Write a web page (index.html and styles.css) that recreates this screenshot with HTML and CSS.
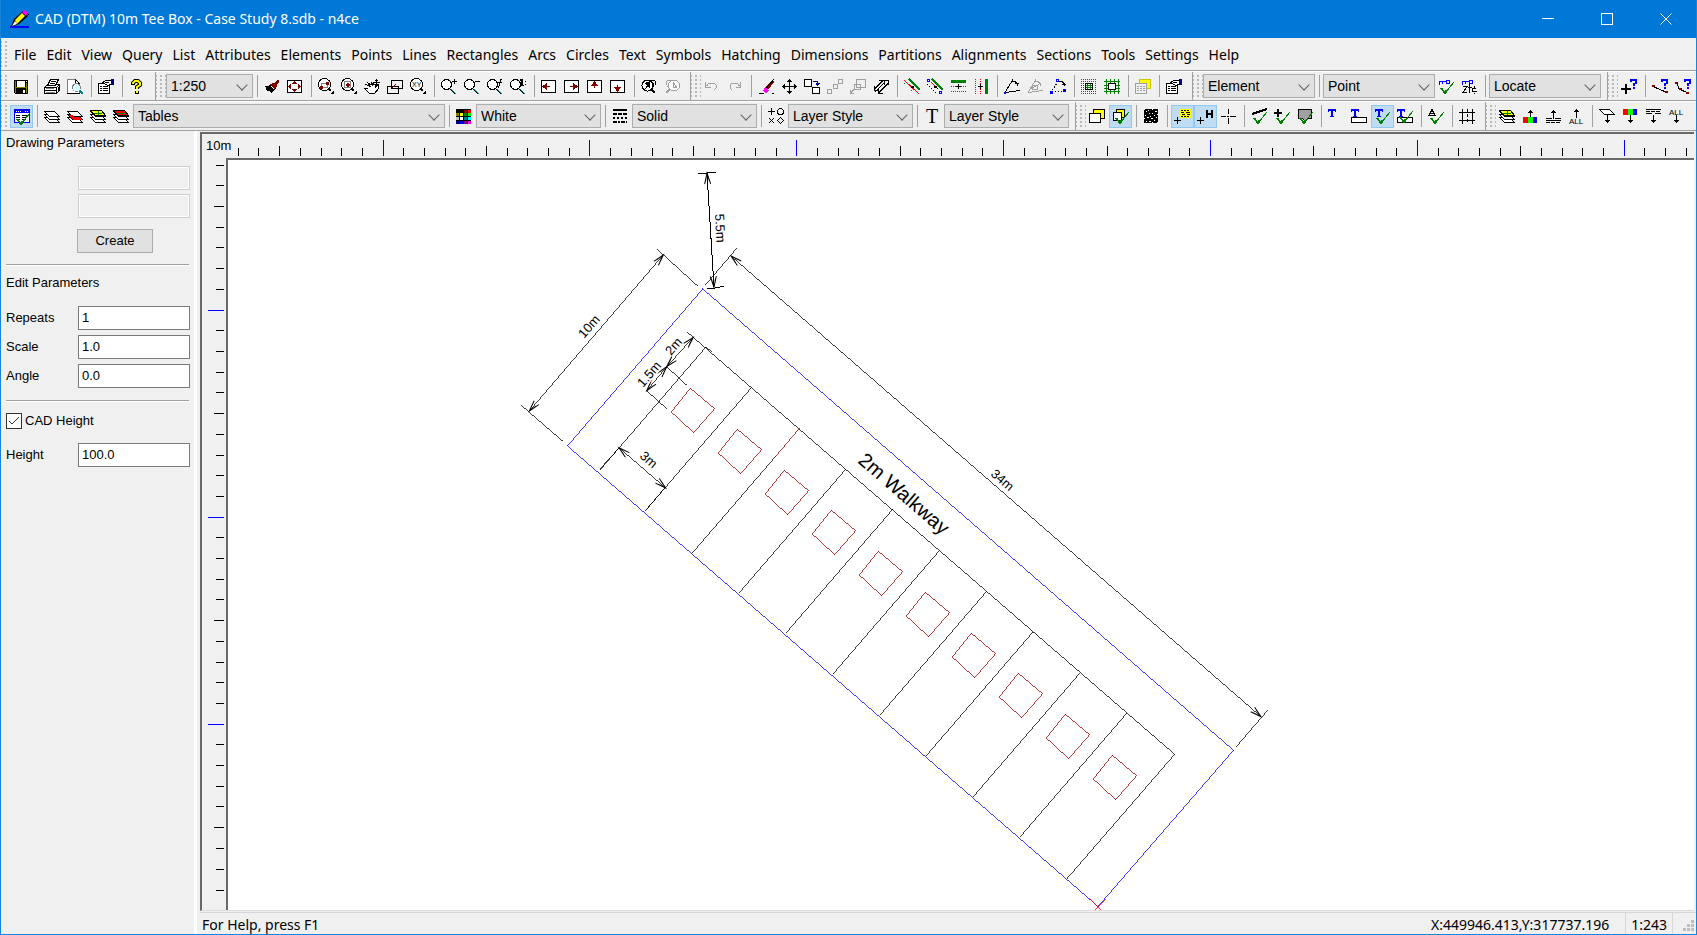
FILE: index.html
```html
<!DOCTYPE html>
<html lang="en">
<head>
<meta charset="utf-8">
<title>CAD (DTM) 10m Tee Box - Case Study 8.sdb - n4ce</title>
<link rel="stylesheet" href="styles.css">
</head>
<body>
<svg class="defs" width="0" height="0" aria-hidden="true">
  <defs>
    <g id="lens"><path stroke="#008080" d="M13 14l5 5"/><path d="M12 14l5 5"/><circle cx="8.500" cy="9.500" r="5" fill="#fff"/></g>
    <g id="zoomarea"><path stroke-width="2" d="M14 14l2 2"/><circle cx="9.500" cy="9.500" r="6" fill="#fff"/><path class="solid" d="M19 15v4h-4z"/></g>
    <g id="panel"><path fill="#fff" d="M3.500 5.500h14v12h-14z"/></g>
    <g id="tick"><path stroke="#008000" d="M18.500 6.500l-8 10"/><path stroke="#008000" stroke-width="2" d="M6 12l4 5 2-3"/></g>
    <g id="sheets"><path fill="#fff" d="M3.500 12.500l5 5h10l-5-5z"/><path fill="#fff" d="M3.500 9.500l5 5h10l-5-5z"/><path fill="#fff" d="M3.500 6.500l5 5h10l-5-5z"/></g>
    <g id="props"><path fill="#fff" d="M3.500 8.500h11v10h-11z"/><path d="M5 11.500h2M8 11.500h5M5 13.500h2M8 13.500h5M5 15.500h2M8 15.500h5"/><path fill="#fff" d="M6.500 8.500l4-3h6v4l-4 1-3-2z"/><path d="M10 7.500h4"/><path stroke="#000080" stroke-width="3" d="M17.500 4v6"/></g>
    <g id="q"><path stroke="#00f" stroke-width="2" d="M13 7V5h5v3l-2 1v2M16 12v2"/></g>
    <g id="key"><path stroke="#00f" d="M4.500 6.500h7M4.500 6v4M7.500 6v3"/><circle cx="13" cy="7" r="2" stroke="#00f"/></g>
    <g id="up"><path d="M11.500 5v9M9 7.500h5M10 6.500h3"/></g>
    <g id="down"><path d="M11.500 10v8M9 15.500h5M10 16.500h3"/></g>
    <g id="tletter"><path class="bold" stroke="#00f" stroke-width="2" d="M3 5h8M7 4v8"/><path stroke="#00f" d="M3.500 4v3M10.500 4v3M5 11.500h4"/></g>
    <path id="bay" d="M752 387L645 511"/>
    <path id="mat" d="M690.300 388.300l24.400 20.400-21 24-22.400-20.700z"/>
    <marker id="arrow" markerUnits="userSpaceOnUse" markerWidth="14" markerHeight="12" refX="12" refY="6" orient="auto-start-reverse" viewBox="0 0 14 12"><path d="M1 3L12 6L1 9M4 4L12 6L4 8" fill="none" stroke="#000"/></marker>
  </defs>
</svg>

<div class="window">
  <header class="titlebar">
    <svg class="logo" width="22" height="20" viewBox="0 0 22 20" aria-hidden="true"><path d="M2 18l3-8 9-8 5 5-9 8z" fill="#000"/><path d="M6 11l7-7 3 3-8 8z" fill="#ff0"/><path d="M3 17l3-5 2 3z" fill="#fff"/><path d="M13 3l3-2 3 3-2 3z" fill="#f0f"/><path d="M18 4l2 2" stroke="#000"/><path d="M1 18h19" stroke="#00f" stroke-width="2"/></svg>
    <h1 class="title">CAD (DTM) 10m Tee Box - Case Study 8.sdb - n4ce</h1>
    <div class="window-buttons">
      <button class="winbtn" aria-label="Minimize"><svg width="12" height="12"><path d="M0 5.500h12"/></svg></button>
      <button class="winbtn" aria-label="Maximize"><svg width="12" height="12"><path d="M.5.5h11v11H.5z"/></svg></button>
      <button class="winbtn smooth" aria-label="Close"><svg width="12" height="12"><path d="M.5.5l11 11M11.500.5l-11 11"/></svg></button>
    </div>
  </header>

  <nav class="menubar" aria-label="Main menu">
    <span class="grip"></span>
    <div class="menus">
      <button>File</button><button>Edit</button><button>View</button><button>Query</button><button>List</button><button>Attributes</button><button>Elements</button><button>Points</button><button>Lines</button><button>Rectangles</button><button>Arcs</button><button>Circles</button><button>Text</button><button>Symbols</button><button>Hatching</button><button>Dimensions</button><button>Partitions</button><button>Alignments</button><button>Sections</button><button>Tools</button><button>Settings</button><button>Help</button>
    </div>
  </nav>

  <div class="toolrow">
    <div class="toolbar" role="toolbar" aria-label="Standard">
      <span class="grip"></span>
      <button class="tool" aria-label="Save"><svg><path class="solid" d="M4 5h14v14H5l-1-1z"/><path class="solid olive" d="M5 6h1v12h-1zM16 8h1v10h-1zM6 12h10v1h-10z"/><path class="solid paper" d="M7 6h8v6H7zM13 15h2v3h-2zM16 6h1v1h-1z"/></svg></button>
      <span class="sep"></span>
      <button class="tool" aria-label="Print"><svg><path fill="#fff" d="M3.500 12.500l3-3h12v6l-3 3h-12z"/><path fill="#fff" d="M6.500 10.500l3-6h8l-3 6z"/><path d="M10 6.500h5M9 8.500h5M3.500 12.500h12v6M15.500 12.500l3-3M4 15.500h11M17.500 12v5"/><path stroke="#808080" d="M5 17.500h9M5 13.500h8"/></svg></button>
      <button class="tool" aria-label="Print preview"><svg><path fill="#fff" stroke="#808080" d="M3.500 4.500h8l4 4v10h-12z"/><path d="M11.500 4.500l4 4h-4zM3 18.500h13"/><path stroke="#008080" stroke-width="2" d="M15 15l4 4"/><circle cx="12.500" cy="12.500" r="4" fill="#d8ffff" stroke="#808080"/></svg></button>
      <span class="sep"></span>
      <button class="tool" aria-label="Properties"><svg><use href="#props"/></svg></button>
      <span class="sep"></span>
      <button class="tool" aria-label="Help"><svg class="smooth"><path stroke-width="4" d="M7 10V8l2-2h3l2 2v2l-3 2v2M11 16v3"/><path stroke="#ff0" stroke-width="2" d="M7 9V8l2-2h3l2 2v2l-3 2v2M11 16v2"/></svg></button>
    </div>
    <div class="toolbar" role="toolbar" aria-label="View">
      <span class="grip"></span>
      <span class="combo w87"><select aria-label="Scale"><option>1:250</option></select></span>
      <span class="sep"></span>
      <button class="tool" aria-label="Redraw"><svg><path class="solid" d="M4 11h3l4-2 4 5-5 4-2-2H6z"/><path class="solid maroon" d="M9 9l4-1 3 3-3 4z"/><path stroke="#800000" stroke-width="3" d="M13 10l5-4"/><path stroke="#fff" d="M10 11l3 3"/></svg></button>
      <button class="tool" aria-label="Zoom extents"><svg><use href="#panel"/><path class="solid maroon" d="M8 9l2.500-3 2.500 3zM8 14l2.500 3 2.500-3zM7 9v5l-3-2.500zM14 9v5l3-2.500z"/></svg></button>
      <span class="sep"></span>
      <button class="tool" aria-label="Zoom window"><svg><use href="#zoomarea"/><path stroke="#808080" d="M6.500 8.500h6v4h-6z"/><path class="solid maroon" d="M11 7h3v3h-3zM5 11h3v3h-3z"/></svg></button>
      <button class="tool" aria-label="Zoom centre"><svg><use href="#zoomarea"/><path stroke="#808080" d="M6.500 6.500h6v6h-6z"/><path class="solid maroon" d="M8 9h4v2H8zM9 8h2v4H9z"/></svg></button>
      <button class="tool" aria-label="Pan"><svg><path fill="#fff" d="M4.500 9.500l5 2-3-4 5 3-1-3 4 3v2l3-3v4l-4 5h-5l-5-5h3"/><path d="M12 7.500h7M15.500 4v7M14 5.500h3M14 9.500h3"/></svg></button>
      <button class="tool" aria-label="Previous views"><svg><path d="M7.500 5.500h11v8h-11zM3.500 11.500h11v7h-11z"/><path stroke="#800000" d="M8 13l4-4"/></svg></button>
      <button class="tool" aria-label="Zoom XY"><svg><use href="#zoomarea"/><text x="5" y="12" font-size="7">XY</text></svg></button>
      <span class="sep"></span>
      <button class="tool" aria-label="Zoom in"><svg><use href="#lens"/><path d="M14 6.500h5M16.500 4v5"/></svg></button>
      <button class="tool" aria-label="Zoom out"><svg><use href="#lens"/><path d="M14 6.500h5"/></svg></button>
      <button class="tool" aria-label="Zoom factor"><svg><use href="#lens"/><path d="M18 4.500h-1.500l-2 9M14 7.500h4"/></svg></button>
      <button class="tool" aria-label="Zoom to scale"><svg><use href="#lens"/><path stroke-width="2" d="M15 4v6M13 5h2"/><path d="M13 10.500h4M18.500 6v1M18.500 9v1"/></svg></button>
      <span class="sep"></span>
      <button class="tool" aria-label="Pan left"><svg><use href="#panel"/><path class="solid maroon" d="M9 8v7l-5-3.500zM9 11h3v1H9z"/></svg></button>
      <button class="tool" aria-label="Pan right"><svg><use href="#panel"/><path class="solid maroon" d="M12 8v7l5-3.500zM9 11h3v1H9z"/></svg></button>
      <button class="tool" aria-label="Pan up"><svg><use href="#panel"/><path class="solid maroon" d="M7 11h7l-3.500-5zM10 11h1v2h-1z"/></svg></button>
      <button class="tool" aria-label="Pan down"><svg><use href="#panel"/><path class="solid maroon" d="M7 12h7l-3.500 5zM10 10h1v2h-1z"/></svg></button>
      <span class="sep"></span>
      <button class="tool" aria-label="Find"><svg><path stroke-width="2" d="M13 14l4 4"/><circle cx="9.500" cy="10.500" r="5.500" fill="#fff"/><path class="solid" d="M6 8l6-2v8l-2-3-2 3H7l2-4z"/><path d="M11 5.500h6M17.500 6v4M16 11l-4 4M15 8v4"/></svg></button>
      <button class="tool" aria-label="Find next" disabled><svg class="dim"><path stroke-width="2" d="M9 14l-4 4"/><circle cx="13" cy="10.500" r="5.500" fill="#fff"/><path d="M16 13l-4-6v6l4-1M11 5.500H6M5.500 6v4M6 11l4 4"/></svg></button>
    </div>
    <div class="toolbar" role="toolbar" aria-label="Edit">
      <span class="grip"></span>
      <button class="tool" aria-label="Undo" disabled><svg class="dim"><path d="M4.500 7v5h5M5 11l3-3h5l2 2v3l-2 2"/><path d="M5 10.500h2"/></svg></button>
      <button class="tool" aria-label="Redo" disabled><svg class="dim"><path d="M16.500 7v5h-5M16 11l-3-3H8l-2 2v3l2 2"/><path d="M14 10.500h2"/></svg></button>
      <span class="sep"></span>
      <button class="tool" aria-label="Erase"><svg><path class="solid maroon" d="M18 4l1 3-6 8-3-3z"/><path d="M19 4l-9 11M4 18.500h5M17 18.500h2"/><path class="solid" fill="#f0f" d="M10 12l4 3-3 3-3-2z"/></svg></button>
      <button class="tool" aria-label="Move"><svg><path d="M11.500 4v15M4 11.500h15M9 6.500h5M10 5.500h3M9 16.500h5M10 17.500h3M6.500 9v5M5.500 10v3M16.500 9v5M17.500 10v3"/></svg></button>
      <button class="tool" aria-label="Copy"><svg><path fill="#fff" d="M3.500 4.500h7v7h-7zM11.500 12.500h7v6h-7z"/><path stroke="#000080" d="M12 6.500h4.500v4M14.500 8.500h4M15 9.500h3"/></svg></button>
      <button class="tool" aria-label="Array" disabled><svg class="dim"><path d="M3.500 14.500h4v4h-4zM9.500 9.500h4v4h-4zM14.500 4.500h4v4h-4z"/></svg></button>
      <button class="tool" aria-label="Scale elements" disabled><svg class="dim"><path d="M9.500 4.500h9v8h-9zM7.500 9.500h6v5h-6zM7 14.500l-4 4M3.500 15v3.500h3"/></svg></button>
      <button class="tool" aria-label="Stretch"><svg><path d="M4 14.500l9-9M9 17.500l9-9M4.500 11v4h4M13.500 5.500h5v4M9 5.500h5v4M8.500 14v4h4"/><path stroke-dasharray="2 1" d="M5 17L17 5"/></svg></button>
      <span class="sep"></span>
      <button class="tool" aria-label="Trim"><svg><path stroke="#008000" stroke-width="2" d="M8 4l11 11"/><path stroke="#f00" d="M3 5l15 14"/><path stroke="#008000" stroke-dasharray="1 2" d="M3.500 8.500l9 9"/><path stroke-width="2" d="M10 12h3"/></svg></button>
      <button class="tool" aria-label="Extend"><svg><path stroke="#008000" stroke-width="2" d="M8 4l11 11"/><path stroke="#00f" d="M3.500 4.500h2v2h-2zM15.500 16.500h2v2h-2z"/><path stroke="#f00" d="M7 7l4 4"/><path stroke-dasharray="1 2" d="M3 9l9 9M11 11l4 4"/><path stroke-width="2" d="M10 12h3"/></svg></button>
      <button class="tool" aria-label="Offset horizontal"><svg><path stroke="#008000" stroke-width="3" d="M4 6.500h15"/><path stroke="#f00" stroke-dasharray="1 1" d="M4 11.500h15"/><path stroke="#008000" stroke-dasharray="1 1" d="M4 16.500h15"/><path d="M9 11.500h5M11.500 9v5"/></svg></button>
      <button class="tool" aria-label="Offset vertical"><svg><path stroke="#008000" stroke-width="3" d="M16.500 4v15"/><path stroke="#f00" stroke-dasharray="1 1" d="M10.500 4v15"/><path stroke="#008000" stroke-dasharray="1 1" d="M5.500 4v15"/><path d="M8 11.500h5M10.500 9v5"/></svg></button>
      <span class="sep"></span>
      <button class="tool" aria-label="Rotate"><svg><path d="M4 17.500l8-13M4 17.500l15-2M11 6.500h3l2 2v2M14 8.500h4"/><path class="solid" fill="#00f" d="M3 17h2v2H3z"/></svg></button>
      <button class="tool" aria-label="Rotate copy" disabled><svg class="dim"><path d="M4 17.500l8-13M4 17.500l15-2M7 14l10-6M11 6.500h3l2 2v2M8 10h5v4H8z"/></svg></button>
      <button class="tool" aria-label="Rotate points"><svg><path stroke-dasharray="1 2" d="M4 17.500l7-11M5 17.500l13-2"/><path d="M11 6.500h4l2 2v2M15 9.500h4"/><path stroke="#00f" d="M9.500 4.500h2v2h-2zM3.500 16.500h2v2h-2zM16.500 14.500h2v2h-2z"/></svg></button>
      <span class="sep"></span>
      <button class="tool" aria-label="Clip inside"><svg><path stroke="#008000" stroke-dasharray="1 1" d="M3 4.500h16M3 6.500h16M3 16.500h16M3 18.500h16M3 8.500h3M3 10.500h3M3 12.500h3M3 14.500h3M17 8.500h2M17 10.500h2M17 12.500h2M17 14.500h2"/><path fill="#fff" d="M7.500 8.500h7v6h-7z"/><path stroke="#008000" d="M9.500 9v5M12.500 9v5M8 10.500h6M8 12.500h6"/></svg></button>
      <button class="tool" aria-label="Clip outside"><svg><path stroke="#008000" d="M3 6.500h16M3 10.500h16M3 16.500h16M5.500 4v15M9.500 4v15M13.500 4v15M17.500 4v15M3 13.500h16"/><path fill="#fff" d="M7.500 8.500h7v6h-7z"/></svg></button>
      <span class="sep"></span>
      <button class="tool" aria-label="Group" disabled><svg class="dim"><path fill="#ff0" stroke="#c8c800" d="M7.500 4.500h11v9h-11z"/><path fill="#f0f0f0" d="M3.500 8.500h11v10h-11z"/><path d="M5 11.500h8M5 13.500h8M5 15.500h8" stroke-dasharray="2 1"/></svg></button>
      <span class="sep"></span>
      <button class="tool" aria-label="Edit properties"><svg><use href="#props"/></svg></button>
    </div>
    <div class="toolbar" role="toolbar" aria-label="Selection">
      <span class="grip"></span>
      <span class="combo w112"><select aria-label="Select by"><option>Element</option></select></span>
      <span class="sep"></span>
      <span class="combo w112"><select aria-label="Snap to"><option>Point</option></select></span>
      <button class="tool" aria-label="Key check"><svg><use href="#key"/><use href="#tick" y="1"/></svg></button>
      <button class="tool" aria-label="Key height"><svg><use href="#key"/><path d="M5 11.500h4l-4 6h4M11.500 9v9M10 12.500h4M18 13.500h-4v3h5M16 11v2M16 18v1"/></svg></button>
      <span class="sep"></span>
      <span class="combo w112"><select aria-label="Locate mode"><option>Locate</option></select></span>
    </div>
    <div class="toolbar" role="toolbar" aria-label="Query">
      <span class="grip"></span>
      <button class="tool" aria-label="Query point"><svg><path stroke-width="2" d="M3 14h10M8 9v10"/><use href="#q"/></svg></button>
      <span class="sep"></span>
      <button class="tool" aria-label="Query line"><svg><path d="M4 11.500l14 6"/><path stroke="#800000" stroke-width="2" d="M3 11h3M16 17h3"/><use href="#q"/></svg></button>
      <button class="tool" aria-label="Query curve"><svg><path d="M5 8l2 6 9 4"/><path stroke="#800000" stroke-width="2" d="M3 8h3M7 14h3M14 18h3"/><use href="#q"/></svg></button>
    </div>
  </div>

  <div class="toolrow lower">
    <div class="toolbar" role="toolbar" aria-label="Layers">
      <span class="grip"></span>
      <button class="tool on" aria-label="Parameter panel" aria-pressed="true"><svg><path stroke="#00f" fill="#fff" d="M4.500 5.500h15v12h-15z"/><path class="solid" fill="#00f" d="M4 4h16v4H4z"/><path stroke="#fff" stroke-dasharray="1 1" d="M6 6.500h6M15 6.500h4"/><path d="M6 10.500h4M6 12.500h4M6 14.500h4M12 10.500h6M12 12.500h5M12 14.500h4"/><use href="#tick" x="1" y="2"/></svg></button>
      <span class="sep"></span>
      <button class="tool" aria-label="Layers"><svg><use href="#sheets"/></svg></button>
      <button class="tool" aria-label="Current layer"><svg><use href="#sheets"/><path class="solid" fill="#f00" d="M4 10h4l2 2h6l2 3H9z"/></svg></button>
      <button class="tool" aria-label="Layer on"><svg><use href="#sheets"/><path fill="#ff0" d="M3.500 5.500h11l4 5h-10z"/><path stroke="#008000" d="M7 8.500h8M11.500 6v4"/></svg></button>
      <button class="tool" aria-label="Layer off"><svg><use href="#sheets"/><path fill="#f00" d="M3.500 5.500h11l4 5h-10z"/><path stroke="#008000" d="M7 8.500h8M11.500 6v4"/></svg></button>
      <span class="combo w312"><select aria-label="Layer"><option>Tables</option></select></span>
      <span class="sep"></span>
      <span class="tool"><svg><path class="solid" d="M3 4h15v15H3z"/><path class="solid" fill="#800000" d="M11 5h3v3h-3z"/><path class="solid" fill="#f00" d="M15 5h3v3h-3z"/><path class="solid olive" d="M3 8h3v3H3z"/><path class="solid" fill="#ff0" d="M7 8h3v3H7z"/><path class="solid" fill="#008000" d="M11 8h3v3h-3z"/><path class="solid" fill="#0f0" d="M15 8h3v3h-3z"/><path class="solid" fill="#c0c0c0" d="M3 12h3v3H3z"/><path class="solid paper" d="M7 12h3v3H7z"/><path class="solid" fill="#008080" d="M11 12h3v3h-3z"/><path class="solid" fill="#0ff" d="M15 12h3v3h-3z"/><path class="solid" fill="#000080" d="M3 16h3v3H3z"/><path class="solid" fill="#00f" d="M7 16h3v3H7z"/><path class="solid" fill="#800080" d="M11 16h3v3h-3z"/><path class="solid" fill="#f0f" d="M15 16h3v3h-3z"/></svg></span>
      <span class="combo w125"><select aria-label="Colour"><option>White</option></select></span>
      <span class="sep"></span>
      <span class="tool"><svg><path stroke-width="2" d="M4 5h14"/><path stroke-width="2" stroke-dasharray="4 1" d="M4 9h14"/><path stroke-width="2" stroke-dasharray="2 2" d="M4 13h14"/><path stroke-width="2" stroke-dasharray="4 1 2 1" d="M4 17h14"/></svg></span>
      <span class="combo w125"><select aria-label="Line style"><option>Solid</option></select></span>
      <span class="sep"></span>
      <span class="tool"><svg><path d="M3 6.500h7M6.500 3v7M4 13l5 5M9 13l-5 5M15.500 12.500l3 3-3 3-3-3z"/><circle cx="15.500" cy="6.500" r="3"/></svg></span>
      <span class="combo w125"><select aria-label="Symbol style"><option>Layer Style</option></select></span>
      <span class="sep"></span>
      <span class="tool"><svg><text class="serif" x="5" y="18" font-size="20">T</text></svg></span>
      <span class="combo w125"><select aria-label="Text style"><option>Layer Style</option></select></span>
    </div>
    <div class="toolbar" role="toolbar" aria-label="Display">
      <span class="grip"></span>
      <button class="tool" aria-label="Overlay"><svg><path fill="#ff0" d="M7.500 4.500h11v9h-11z"/><path fill="#fff" d="M3.500 8.500h11v9h-11z"/></svg></button>
      <button class="tool on" aria-label="Overlay check" aria-pressed="true"><svg><path fill="#ff0" d="M7.500 4.500h8v8h-8z"/><path fill="#fff" d="M4.500 7.500h8v8h-8z"/><use href="#tick" x="1" y="1"/></svg></button>
      <span class="sep"></span>
      <button class="tool" aria-label="Hatch display"><svg><path class="solid" d="M4 4h14v14H4z"/><path stroke="#fff" d="M6 6.500h1M8 5.500h1M9 8.500h1M12 8.500h1M15 6.500h2M5 10.500h1M7 12.500h2M14 10.500h1M16 12.500h1M11 13.500h2M6 16.500h1M9 16.500h2M14 15.500h1M4 13.500h1M17 9.500h1M12 4.500h1M10 11.500h1M12 17.500h1M17 17.500h1M4 4.500h1"/></svg></button>
      <span class="sep"></span>
      <button class="tool on" aria-label="Point labels" aria-pressed="true"><svg><path d="M3 15.500h7M6.500 12v7"/><path class="solid" fill="#ff0" d="M9 4h11v9H9z"/><path stroke-dasharray="2 1" d="M10 5.500h9M10 11.500h9"/><path d="M10 7.500h3M15 7.500h4M11 9.500h3M16 9.500h3"/></svg></button>
      <button class="tool on" aria-label="Point heights" aria-pressed="true"><svg><path d="M3 15.500h7M6.500 12v7"/><path stroke-width="2" d="M13 5v8M18 5v8M13 9h5"/></svg></button>
      <button class="tool" aria-label="Point markers"><svg><path d="M4 11.500h5M10 11.500h2M13 11.500h6M11.500 4v5M11.500 13v6"/></svg></button>
      <span class="sep"></span>
      <button class="tool" aria-label="Show lines"><svg><use href="#tick" y="1"/><path stroke-width="2" d="M4 9l15-5"/></svg></button>
      <button class="tool" aria-label="Show points"><svg><use href="#tick" y="1"/><path stroke-width="2" d="M3 8h8M7 4v8"/></svg></button>
      <button class="tool" aria-label="Show areas"><svg><path fill="#a0a0a0" d="M4.500 4.500h13v9h-3l-3 3-3-3h-4z"/><use href="#tick" y="1"/></svg></button>
      <span class="sep"></span>
      <button class="tool" aria-label="Text"><svg><use href="#tletter"/></svg></button>
      <button class="tool" aria-label="Text box"><svg><use href="#tletter"/><path fill="#fff" d="M3.500 12.500h15v5h-15z"/></svg></button>
      <button class="tool on" aria-label="Show text" aria-pressed="true"><svg><use href="#tletter" x="1"/><use href="#tick" y="1"/></svg></button>
      <button class="tool" aria-label="Show text box"><svg><use href="#tletter"/><path fill="#fff" d="M3.500 12.500h15v5h-15z"/><use href="#tick"/></svg></button>
      <span class="sep"></span>
      <button class="tool" aria-label="Show triangles"><svg><path d="M4 10.500l3-6 3 6zM6 8.500h2"/><use href="#tick" y="1"/></svg></button>
      <span class="sep"></span>
      <button class="tool" aria-label="Show grid"><svg><path d="M3 7.500h16M3 15.500h16M6.500 4v15M16.500 4v15"/><path stroke-dasharray="3 2" d="M11.500 4v15"/></svg></button>
    </div>
    <div class="toolbar last" role="toolbar" aria-label="Layer order">
      <span class="grip"></span>
      <button class="tool" aria-label="Layer set"><svg><use href="#sheets"/><path fill="#ff0" d="M3.500 5.500h11l4 5h-10z"/><path stroke="#008000" d="M7 8.500h8M11.500 6v4"/></svg></button>
      <button class="tool" aria-label="Colours up"><svg><use href="#up"/><path class="solid" fill="#f00" d="M4 12h5v6H4z"/><path class="solid" fill="#0f0" d="M9 12h5v6H9z"/><path class="solid" fill="#00f" d="M14 12h4v6h-4z"/></svg></button>
      <button class="tool" aria-label="Styles up"><svg><use href="#up"/><path d="M4 13.500h6M13 13.500h6M4 15.500h15"/><path stroke-dasharray="4 1" d="M4 17.500h15"/></svg></button>
      <button class="tool" aria-label="All up"><svg><use href="#up" y="-1"/><text x="4" y="19" font-size="8">ALL</text></svg></button>
      <span class="sep"></span>
      <button class="tool" aria-label="Layer down"><svg><path fill="#fff" d="M3.500 4.500h10l5 5h-10z"/><use href="#down"/></svg></button>
      <button class="tool" aria-label="Colours down"><svg><path class="solid" fill="#f00" d="M4 4h5v6H4z"/><path class="solid" fill="#0f0" d="M9 4h5v6H9z"/><path class="solid" fill="#00f" d="M14 4h4v6h-4z"/><use href="#down"/></svg></button>
      <button class="tool" aria-label="Styles down"><svg><path d="M4 4.500h15M4 8.500h6M13 8.500h6"/><path stroke-dasharray="4 1" d="M4 6.500h15"/><use href="#down"/></svg></button>
      <button class="tool" aria-label="All down"><svg><text x="4" y="10" font-size="8">ALL</text><use href="#down"/></svg></button>
    </div>
  </div>

  <div class="workspace">
    <aside class="sidebar">
      <h2>Drawing Parameters</h2>
      <form class="params blank">
        <input type="text" aria-label="First parameter" disabled>
        <input type="text" aria-label="Second parameter" disabled>
        <button type="button" class="create">Create</button>
      </form>
      <hr>
      <h2>Edit Parameters</h2>
      <form class="params edit">
        <label for="repeats">Repeats</label><input id="repeats" type="text" value="1">
        <label for="scale">Scale</label><input id="scale" type="text" value="1.0">
        <label for="angle">Angle</label><input id="angle" type="text" value="0.0">
      </form>
      <hr>
      <label class="check"><input type="checkbox" checked><span class="box"><svg width="12" height="12" viewBox="0 0 12 12"><path d="M1 6l3 3 7-7"/></svg></span>CAD Height</label>
      <form class="params height">
        <label for="height">Height</label><input id="height" type="text" value="100.0">
      </form>
    </aside>

    <main class="main">
      <div class="view">
        <div class="ruler-top">
          <span class="unit">10m</span>
          <svg class="hruler"><g transform="translate(-235 -134)">
            <path d="M238.500 148v8M258.500 148v8M279.500 146v10M300.500 148v8M321.500 148v8M341.500 148v8M362.500 148v8M403.500 148v8M424.500 148v8M445.500 148v8M465.500 148v8M486.500 146v10M507.500 148v8M527.500 148v8M548.500 148v8M569.500 148v8M610.500 148v8M631.500 148v8M652.500 148v8M672.500 148v8M693.500 146v10M714.500 148v8M734.500 148v8M755.500 148v8M776.500 148v8M817.500 148v8M838.500 148v8M858.500 148v8M879.500 148v8M900.500 146v10M920.500 148v8M941.500 148v8M962.500 148v8M982.500 148v8M1024.500 148v8M1045.500 148v8M1065.500 148v8M1086.500 148v8M1107.500 146v10M1127.500 148v8M1148.500 148v8M1169.500 148v8M1189.500 148v8M1231.500 148v8M1251.500 148v8M1272.500 148v8M1293.500 148v8M1313.500 146v10M1334.500 148v8M1355.500 148v8M1376.500 148v8M1396.500 148v8M1438.500 148v8M1458.500 148v8M1479.500 148v8M1500.500 148v8M1520.500 146v10M1541.500 148v8M1562.500 148v8M1582.500 148v8M1603.500 148v8M1644.500 148v8M1665.500 148v8M1686.500 148v8"/>
            <path class="major" d="M383.500 140v16M589.500 140v16M796.500 140v16M1003.500 140v16M1210.500 140v16M1417.500 140v16M1624.500 140v16"/>
          </g></svg>
        </div>
        <div class="ruler-left">
          <svg class="vruler"><g transform="translate(-202 -158)">
            <path d="M216 165.500h8M216 185.500h8M214 206.500h10M216 227.500h8M216 247.500h8M216 268.500h8M216 289.500h8M216 330.500h8M216 351.500h8M216 372.500h8M216 392.500h8M214 413.500h10M216 434.500h8M216 455.500h8M216 475.500h8M216 496.500h8M216 537.500h8M216 558.500h8M216 579.500h8M216 599.500h8M214 620.500h10M216 641.500h8M216 662.500h8M216 682.500h8M216 703.500h8M216 744.500h8M216 765.500h8M216 786.500h8M216 806.500h8M214 827.500h10M216 848.500h8M216 869.500h8M216 890.500h8"/>
            <path class="major" d="M208 310.500h16M208 517.500h16M208 724.500h16"/>
          </g></svg>
        </div>
        <div class="canvas">
          <svg class="drawing" role="img" aria-label="Tee box plan"><g transform="translate(-228 -160)">
            <g class="ink">
              <path d="M686.700 331.700L1174.700 754.300L1066.700 879M705.700 347.300L600 470"/>
              <use href="#bay"/><path d="M776 456L692.300 553"/><use href="#bay" x="94" y="82"/><use href="#bay" x="141" y="122"/><use href="#bay" x="188" y="163"/><use href="#bay" x="235" y="204"/><use href="#bay" x="281" y="245"/><use href="#bay" x="328" y="286"/><use href="#bay" x="375" y="326"/>
              <path d="M600 469l19-21M646 510l19-22M706 347l6 5"/>
              <path d="M736.700 248.300L705.700 284.700M1267.700 710.300L1236.300 746.700M657.300 249.300L697.700 286M521.300 405.300L563.300 441.700M666.700 366.700L687.300 385.700M646.700 390.700L666.700 408.700"/>
              <path class="level" d="M698 173.500h9M707 172.500h9M707 288.500h8M715 287.500h5M720 286.500h4"/>
              <path class="dim-line" d="M731 256L1261 716.700"/><path class="dim-line" d="M663.300 255L529.300 411"/><path class="dim-line level" d="M707 173L714 287.300"/><path class="dim-line" d="M693.300 337.300L666.700 366.700"/><path class="dim-line" d="M666.700 366.700L646.700 390.700"/><path class="dim-line" d="M619 447.700L665.700 488"/>
            </g>
            <g class="mats">
              <path d="M799.700 428L776 456"/>
              <use href="#mat"/><use href="#mat" x="47" y="41"/><use href="#mat" x="94" y="82"/><use href="#mat" x="141" y="122"/><use href="#mat" x="188" y="163"/><use href="#mat" x="235" y="204"/><use href="#mat" x="281" y="245"/><use href="#mat" x="328" y="285"/><use href="#mat" x="375" y="326"/><use href="#mat" x="422" y="367"/>
            </g>
            <path class="outline" d="M702.300 288.500L567 445.500L1098 906.500L1233.500 750.300z"/>
            <path class="cross" d="M1089 898L1101 910M1106 899L1095 910"/>
            <g class="notes">
              <text transform="translate(584 339) rotate(-49)">10m</text>
              <text transform="translate(715 214) rotate(87)">5.5m</text>
              <text transform="translate(671 356) rotate(-49)">2m</text>
              <text class="halo" transform="translate(643 388) rotate(-49)">1.5m</text>
              <text transform="translate(639 457) rotate(41)">3m</text>
              <text transform="translate(990 475) rotate(41)">34m</text>
              <text class="big" transform="translate(857 462) rotate(41)">2m Walkway</text>
            </g>
          </g></svg>
        </div>
      </div>
      <footer class="statusbar">
        <span class="hint">For Help, press F1</span>
        <span class="coords">X:449946.413,Y:317737.196</span>
        <span class="ratio">1:243</span>
        <svg class="sizegrip" width="12" height="12" aria-hidden="true"><path d="M8 0h3v3H8zM4 4h3v3H4zM8 4h3v3H8zM0 8h3v3H0zM4 8h3v3H4zM8 8h3v3H8z"/></svg>
      </footer>
    </main>
  </div>
</div>
</body>
</html>
```

FILE: styles.css
```css
* { box-sizing: border-box; }

:root {
  --face: #f0f0f0;
  --line: #a0a0a0;
  --blue: #0078d7;
  --ui: "Noto Sans", "Open Sans", sans-serif;
  --sans: "Liberation Sans", Arial, sans-serif;
}

html, body { height: 100%; margin: 0; }
body { font: 13px/16px var(--sans); color: #000; background: var(--face); overflow: hidden; }
button, input, select { font: inherit; color: inherit; margin: 0; }
button { border: 0; background: none; padding: 0; }
.defs { position: absolute; }

.window {
  display: flex;
  flex-direction: column;
  height: 100vh;
  border: 1px solid #1883d7;
  border-top: 0;
  background: var(--face);
}

/* Title bar */
.titlebar { display: flex; align-items: center; flex: none; height: 38px; padding: 0 1px 0 8px; background: var(--blue); color: #fff; }
.logo { flex: none; }
.title { flex: 1; margin: 0 0 0 4px; font: 400 14px/20px var(--ui); white-space: nowrap; }
.window-buttons { display: flex; }
.winbtn { width: 59px; height: 38px; display: grid; place-items: center; }
.winbtn svg { fill: none; stroke: #fff; shape-rendering: crispEdges; }
.winbtn.smooth svg { shape-rendering: auto; }

/* Menu bar */
.menubar { display: flex; flex: none; height: 33px; border-bottom: 1px solid var(--line); }
.menus { display: flex; align-items: center; gap: 10px; margin-left: 4px; padding-top: 2px; font: 14px/20px var(--ui); }
.menus button { white-space: nowrap; }

.grip {
  flex: none;
  width: 10px;
  margin: 2px 0;
  background: radial-gradient(circle at 1px 1px, #b8b8b8 1px, transparent 1px) 4px 1px / 5px 4px repeat;
}
.menubar .grip, .toolbar:first-child .grip { width: 9px; }

/* Toolbars */
.toolrow { display: flex; flex: none; height: 30px; border-top: 1px solid #fff; border-bottom: 1px solid var(--line); overflow: hidden; }
.toolbar { display: flex; flex: none; align-items: center; padding-right: 6px; border-right: 1px solid var(--line); }
.toolbar .grip { align-self: stretch; }
.toolbar:last-child { border-right: 0; padding-right: 0; }
.tool { flex: none; width: 23px; height: 23px; display: block; }
.tool svg { display: block; width: 23px; height: 23px; fill: none; stroke: #000; shape-rendering: crispEdges; }
.tool svg.smooth { shape-rendering: auto; }
.tool.on { background: #c0dcf3; box-shadow: inset 0 0 0 1px #90c8f6; }
.tool .dim { stroke: #a0a0a0; }
.tool text { fill: #000; stroke: none; font-family: var(--sans); }
.tool text.serif { font-family: "Liberation Serif", serif; }
.solid { stroke: none; fill: #000; }
.solid[fill="#f00"] { fill: #f00; }
.solid[fill="#0f0"] { fill: #0f0; }
.solid[fill="#00f"] { fill: #00f; }
.solid[fill="#0ff"] { fill: #0ff; }
.solid[fill="#ff0"] { fill: #ff0; }
.solid[fill="#f0f"] { fill: #f0f; }
.solid[fill="#800000"], .maroon { fill: #800000; }
.solid[fill="#008000"] { fill: #008000; }
.solid[fill="#008080"] { fill: #008080; }
.solid[fill="#000080"] { fill: #000080; }
.solid[fill="#800080"] { fill: #800080; }
.solid[fill="#c0c0c0"] { fill: #c0c0c0; }
.olive { fill: #808000; }
.paper { fill: #fff; }
.sep { flex: none; align-self: stretch; width: 8px; padding: 3px 0; }
.sep::before { content: ""; display: block; height: 100%; margin-left: 4px; border-left: 1px solid var(--line); }

.combo { position: relative; flex: none; height: 24px; }
.combo select {
  appearance: none;
  width: 100%;
  height: 24px;
  padding: 0 20px 0 4px;
  border: 1px solid #adadad;
  border-radius: 0;
  background: #e1e1e1;
  font-size: 14px;
}
.combo::after {
  content: "";
  position: absolute;
  right: 7px;
  top: 7px;
  width: 7px;
  height: 7px;
  border: solid #606060;
  border-width: 0 1px 1px 0;
  transform: rotate(45deg);
  pointer-events: none;
}
.w87 { width: 87px; }
.w112 { width: 112px; }
.w125 { width: 125px; }
.w312 { width: 312px; }

/* Parameter panel */
.workspace { display: flex; flex: 1; min-height: 0; }
.sidebar { flex: none; width: 193px; padding: 4px 4px 0 5px; }
.sidebar h2 { margin: 0; font: 400 13px/16px var(--sans); }
.sidebar hr { margin: 11px 1px 9px 0; border: 0; border-top: 1px solid var(--line); border-bottom: 1px solid #fff; }
.params { display: grid; grid-template-columns: 72px 112px; align-items: center; row-gap: 4px; }
.params input { width: 112px; height: 24px; padding: 0 3px 2px; border: 1px solid #7a7a7a; background: #fff; }
.params input:disabled { border-color: #ccc; background: var(--face); box-shadow: inset 0 0 0 1px #fff; }
.blank { padding-top: 15px; }
.blank > * { grid-column: 2; }
.create { width: 76px; height: 24px; margin-top: 7px; margin-left: -1px; border: 1px solid #adadad; background: #e1e1e1; }
.edit { padding-top: 15px; padding-bottom: 1px; row-gap: 5px; }
.check { display: flex; align-items: center; gap: 3px; margin-top: 11px; }
.check input { position: absolute; opacity: 0; }
.box { width: 16px; height: 16px; border: 1px solid #333; background: #fff; display: grid; place-items: center; }
.box svg { fill: none; stroke: #333; stroke-width: 1; }
.height { padding-top: 14px; }

/* Drawing view */
.main { display: flex; flex-direction: column; flex: 1; min-width: 0; border-left: 3px solid #fff; padding-left: 3px; }
.view {
  flex: 1;
  min-height: 0;
  margin: 1px 2px 1px 0;
  display: grid;
  grid-template: 24px 1fr / 24px 1fr;
  border: solid #696969;
  border-width: 2px 0 1px 2px;
  border-bottom-color: #dcdcdc;
}
.ruler-top { grid-column: 1 / 3; display: flex; min-width: 0; }
.unit { width: 33px; padding: 4px 0 0 4px; white-space: nowrap; }
.hruler { flex: 1; min-width: 0; height: 24px; overflow: hidden; }
.ruler-left { min-height: 0; }
.vruler { display: block; width: 24px; height: 100%; overflow: hidden; }
.hruler path, .vruler path { stroke: #000; shape-rendering: crispEdges; }
.hruler .major, .vruler .major { stroke: #00f; }
.canvas { min-width: 0; min-height: 0; border-left: 2px solid #696969; border-top: 2px solid #696969; background: #fff; }
.drawing { display: block; width: 100%; height: 100%; overflow: hidden; }
.drawing path, .drawing use { fill: none; stroke-width: .76; shape-rendering: crispEdges; }
.drawing .level { stroke-width: 1; }
.ink { stroke: #000; }
.mats { stroke: #a00000; }
.cross { stroke: #f00; }
.outline { stroke: #00f; }
.dim-line { marker-start: url(#arrow); marker-end: url(#arrow); }
.notes { font: 13px var(--sans); fill: #000; }
.notes .big { font-size: 20px; }
.halo { paint-order: stroke; stroke: #fff; stroke-width: 3px; }

/* Status bar */
.statusbar { display: flex; flex: none; align-items: stretch; height: 22px; border-top: 1px solid #d7d7d7; font: 14px/23px var(--ui); white-space: nowrap; }
.hint { flex: 1; padding-left: 2px; }
.coords { padding-right: 16px; }
.ratio { padding: 0 5px; border: solid #d7d7d7; border-width: 0 1px; }
.sizegrip { align-self: flex-end; margin: 0 1px 2px 10px; fill: #bfbfbf; }
```
